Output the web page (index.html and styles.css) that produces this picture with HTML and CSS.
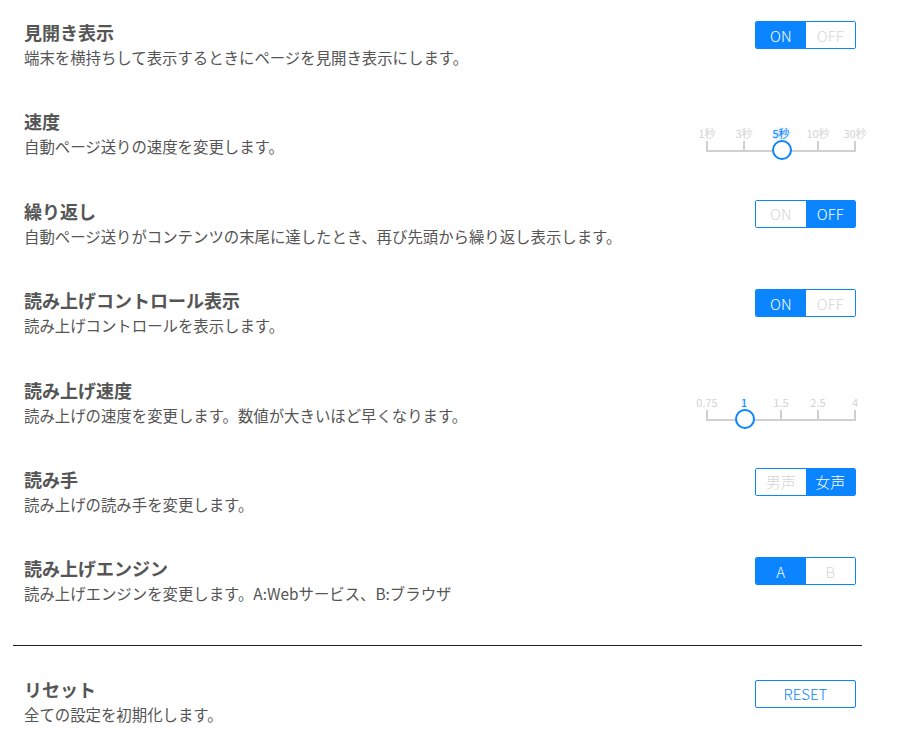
FILE: index.html
```html
<!DOCTYPE html>
<html lang="ja">
<head>
  <meta charset="UTF-8">
  <meta name="viewport" content="width=device-width, initial-scale=1.0">
  <title>設定</title>
  <link rel="stylesheet" href="styles.css">
</head>
<body>
  <div class="settings">
    <div class="setting">
      <div class="setting-text">
        <div class="setting-title">見開き表示</div>
        <div class="setting-desc">端末を横持ちして表示するときにページを見開き表示にします。</div>
      </div>
      <div class="toggle">
        <span class="toggle-item active">ON</span>
        <span class="toggle-item">OFF</span>
      </div>
    </div>

    <div class="setting">
      <div class="setting-text">
        <div class="setting-title">速度</div>
        <div class="setting-desc">自動ページ送りの速度を変更します。</div>
      </div>
      <div class="slider">
        <div class="slider-labels">
          <span>1秒</span>
          <span>3秒</span>
          <span class="current">5秒</span>
          <span>10秒</span>
          <span>30秒</span>
        </div>
        <div class="slider-track">
          <span class="tick"></span>
          <span class="tick"></span>
          <span class="tick"></span>
          <span class="tick"></span>
          <span class="tick"></span>
          <span class="knob" style="left: 50%"></span>
        </div>
      </div>
    </div>

    <div class="setting">
      <div class="setting-text">
        <div class="setting-title">繰り返し</div>
        <div class="setting-desc">自動ページ送りがコンテンツの末尾に達したとき、再び先頭から繰り返し表示します。</div>
      </div>
      <div class="toggle">
        <span class="toggle-item">ON</span>
        <span class="toggle-item active">OFF</span>
      </div>
    </div>

    <div class="setting">
      <div class="setting-text">
        <div class="setting-title">読み上げコントロール表示</div>
        <div class="setting-desc">読み上げコントロールを表示します。</div>
      </div>
      <div class="toggle">
        <span class="toggle-item active">ON</span>
        <span class="toggle-item">OFF</span>
      </div>
    </div>

    <div class="setting">
      <div class="setting-text">
        <div class="setting-title">読み上げ速度</div>
        <div class="setting-desc">読み上げの速度を変更します。数値が大きいほど早くなります。</div>
      </div>
      <div class="slider">
        <div class="slider-labels">
          <span>0.75</span>
          <span class="current">1</span>
          <span>1.5</span>
          <span>2.5</span>
          <span>4</span>
        </div>
        <div class="slider-track">
          <span class="tick"></span>
          <span class="tick"></span>
          <span class="tick"></span>
          <span class="tick"></span>
          <span class="tick"></span>
          <span class="knob" style="left: 25%"></span>
        </div>
      </div>
    </div>

    <div class="setting">
      <div class="setting-text">
        <div class="setting-title">読み手</div>
        <div class="setting-desc">読み上げの読み手を変更します。</div>
      </div>
      <div class="toggle">
        <span class="toggle-item">男声</span>
        <span class="toggle-item active">女声</span>
      </div>
    </div>

    <div class="setting">
      <div class="setting-text">
        <div class="setting-title">読み上げエンジン</div>
        <div class="setting-desc">読み上げエンジンを変更します。A:Webサービス、B:ブラウザ</div>
      </div>
      <div class="toggle">
        <span class="toggle-item active">A</span>
        <span class="toggle-item">B</span>
      </div>
    </div>

    <hr class="divider">

    <div class="setting reset-row">
      <div class="setting-text">
        <div class="setting-title">リセット</div>
        <div class="setting-desc">全ての設定を初期化します。</div>
      </div>
      <button class="reset-btn">RESET</button>
    </div>
  </div>
</body>
</html>
```

FILE: styles.css
```css
/* settings page */
body {
  margin: 0;
  padding: 0;
  font-family: "Noto Sans CJK JP", "Noto Sans", sans-serif;
  background-color: #fff;
  color: #555;
}

.settings {
  width: 850px;
  padding: 0 0 0 13px;
}

.setting {
  display: flex;
  justify-content: space-between;
  align-items: flex-start;
  padding: 20px 7px 19.4px 11px;
  height: 50px;
}

.setting-title {
  font-size: 18px;
  font-weight: bold;
  line-height: 24px;
}

.setting-desc {
  font-size: 15.4px;
  line-height: 26px;
  white-space: nowrap;
}

/* ON / OFF style switch */
.toggle {
  display: flex;
  margin-top: 1px;
  width: 99px;
  height: 26px;
  border: 1px solid #0a84ff;
  border-radius: 2px;
  overflow: hidden;
}

.toggle-item {
  flex: 1;
  display: flex;
  justify-content: center;
  align-items: center;
  font-family: "Noto Sans CJK JP", "Noto Sans", sans-serif;
  font-size: 15px;
  font-weight: 300;
  color: #d6d6d6;
  background-color: #fff;
}

.toggle-item.active {
  background-color: #0a84ff;
  color: #fff;
}

/* step slider */
.slider {
  width: 150px;
  margin-top: 16px;
}

.slider-labels {
  display: flex;
  justify-content: space-between;
  margin: 0 -15px;
  height: 16px;
}

.slider-labels span {
  width: 32px;
  text-align: center;
  font-size: 11px;
  line-height: 16px;
  color: #d3d3d3;
}

.slider-labels span.current {
  color: #0a84ff;
  text-shadow: 0 0 3px rgba(10, 132, 255, 0.5);
}

.slider-track {
  position: relative;
  display: flex;
  justify-content: space-between;
  margin-top: 0;
  height: 9px;
  border-bottom: 2px solid #d0d0d0;
}

.tick {
  width: 2px;
  height: 9px;
  background-color: #d0d0d0;
}

.knob {
  position: absolute;
  top: -1px;
  width: 16px;
  height: 16px;
  margin-left: -9px;
  border: 2px solid #0a84ff;
  border-radius: 50%;
  background-color: #fff;
}

.divider {
  margin: 19px 0 0;
  width: 849px;
  border: none;
  border-top: 1px solid #222;
}

.reset-row {
  padding-top: 31px;
}

.reset-btn {
  margin-top: 3px;
  width: 101px;
  height: 28px;
  border: 1px solid #0a84ff;
  border-radius: 2px;
  background-color: #fff;
  color: #0a84ff;
  font-family: "Noto Sans CJK JP", "Noto Sans", sans-serif;
  font-size: 15px;
  font-weight: 300;
}
```
